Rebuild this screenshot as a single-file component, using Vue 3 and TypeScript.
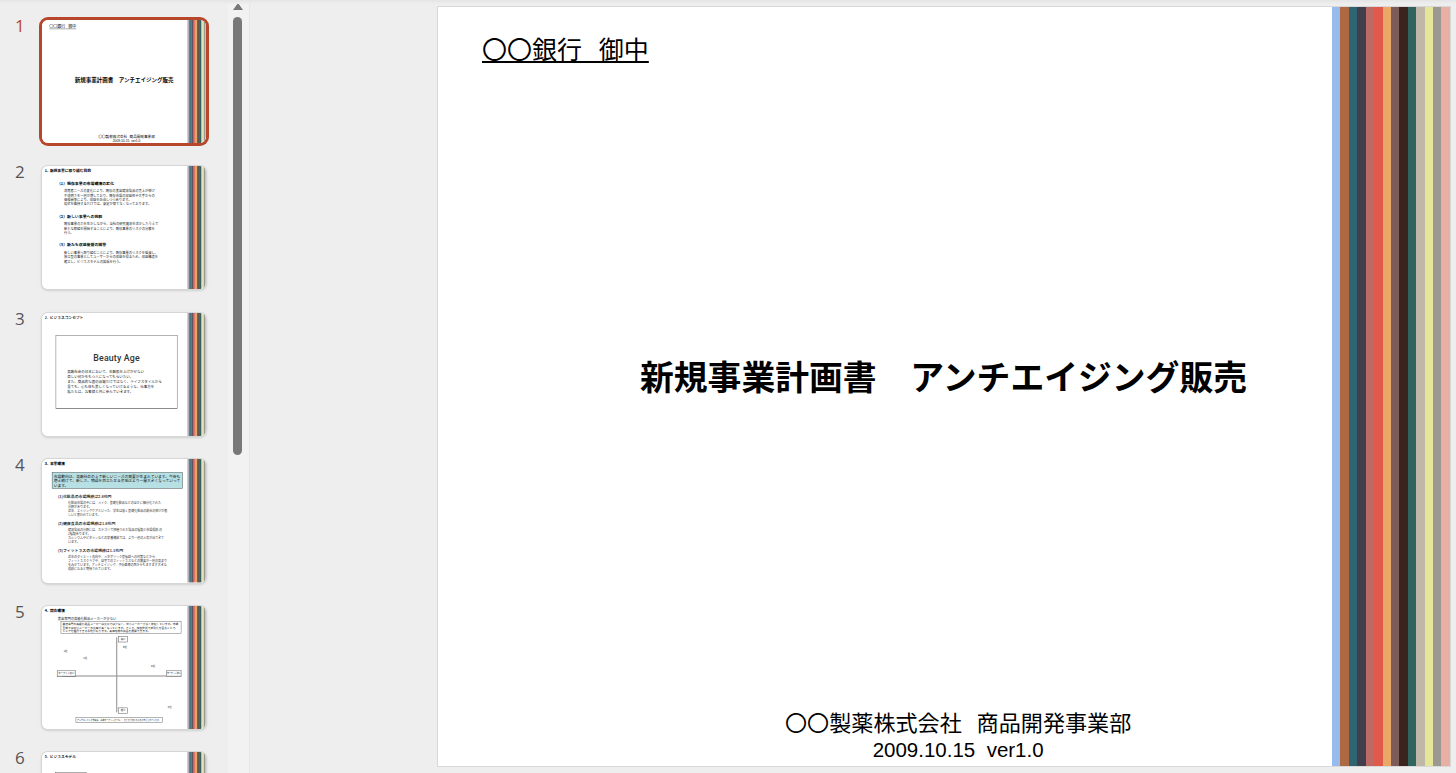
<script setup lang="ts">
const stripes: string[] = [
  '#98bbee', '#ad6a42', '#2f6472', '#413f4c', '#bd6a66', '#df5a4a', '#e9a868',
  '#7d5b58', '#3a251e', '#31645f', '#bfb8a8', '#e6e69a', '#9a9890', '#e8b0a4'
]
const numbers: number[] = [1, 2, 3, 4, 5, 6]
const conceptText =
  '高齢社会の日本において、年齢肌を上げがせない\n楽しい何かをもつ人になってもらいたい。\nまた、商品的な面の品質だけではなく、ライフスタイルから\n見ても、心も体も美しくなっていけるような、仕事方を\n私たちは、お客様と共に歩んでいきます。'
const plans = [
  {
    head: '（1）既存事業の市場環境の変化',
    body: '消費者ニーズの変化により、既存の美容健康食品の売上が伸び\n不透明さを一層が増しており、既存市場の収益性や大手からの\n価格競争により、収益を圧迫しつつあります。\n現状を維持するだけでは、安定が保てなくなっております。'
  },
  {
    head: '（2）新しい事業への挑戦',
    body: '既存事業の力を生かしながら、当社の研究資源を活かしたうえで\n新たな取組を開始することにより、既存事業のリスクの分散を\n行う。'
  },
  {
    head: '（3）新たな収益基盤の構築',
    body: '新しい事業へ取り組むことにより、既存事業のリスクを低減し、\n独立型の事業としてユーザーからの収益を得るため、収益構造を\n確立し、ビジネスモデルの拡張を行う。'
  }
]
const markets = [
  {
    head: '(1)化粧品の市場規模は2.8兆円',
    body: '化粧品市場の中には、メイク、基礎化粧品などのほかに細分化された\n分野があります。\n近年、エイジングケアといった、学生は低く基礎化粧品の割合の伸びが著\nしいと思われています。'
  },
  {
    head: '(2)健康食品の市場規模は1.8兆円',
    body: '健康食品の分野には、カテゴリで把握された食品の種類と市場規模 の\n2種類あります。\nカルシウムやビタミンなどの栄養補給では、より一層の人気が出てきて\nいます。'
  },
  {
    head: '(3)フィットネスの市場規模は1.1兆円',
    body: '近年のダイエット志向や、メタボリック症候群への対策などから、\nフィットネスクラブや、自宅でのフィットネスなどの需要が一層の高まり\nをみせています。アンチエイジング、予防医療の面からもますます大きな\n規模になると期待されています。'
  }
]
</script>

<template>
  <div class="app">
    <aside class="rail">
      <div class="thumbs">
        <div v-for="n in numbers" :key="n" class="row" :class="{ current: n === 1 }">
          <span class="num">{{ n }}</span>
          <div class="thumb">
            <div class="scaled">
              <div class="page">
                <div class="body">
                  <template v-if="n === 1">
                    <div class="cover">
                      <div class="to"><u>〇〇銀行&nbsp;&nbsp;&nbsp;御中</u></div>
                      <div class="name">新規事業計画書　アンチエイジング販売</div>
                      <div class="from">
                        <div class="company">〇〇製薬株式会社&nbsp;&nbsp;&nbsp;商品開発事業部</div>
                        <div class="date">2009.10.15&nbsp;&nbsp;ver1.0</div>
                      </div>
                    </div>
                  </template>

                  <template v-else-if="n === 2">
                    <h3 class="sec">1.&nbsp;&nbsp;新規事業に取り組む目的</h3>
                    <div class="plans">
                      <div v-for="p in plans" :key="p.head" class="plan">
                        <h4>{{ p.head }}</h4>
                        <p>{{ p.body }}</p>
                      </div>
                    </div>
                  </template>

                  <template v-else-if="n === 3">
                    <h3 class="sec light">2.&nbsp;&nbsp;ビジネスコンセプト</h3>
                    <div class="concept">
                      <div class="brand">Beauty Age</div>
                      <p>{{ conceptText }}</p>
                    </div>
                  </template>

                  <template v-else-if="n === 4">
                    <h3 class="sec">3.&nbsp;&nbsp;事業環境</h3>
                    <div class="callout">市場動向は、高齢社会の上で新しいニーズの需要が生まれています。今後も増え続けて、新しさ、物語を目立たせる余地はより一層大きくなっていっています。</div>
                    <div class="markets">
                      <div v-for="m in markets" :key="m.head" class="market">
                        <h4>{{ m.head }}</h4>
                        <p>{{ m.body }}</p>
                      </div>
                    </div>
                  </template>

                  <template v-else-if="n === 5">
                    <h3 class="sec">4.&nbsp;&nbsp;競合環境</h3>
                    <div class="sub">美容専門の高級化粧品メーカーが少ない</div>
                    <div class="note">美容専門の高級化粧品メーカーは大手では少なく、中小メーカーが多く存在しています。市場全体では中小メーカーの比率が高くなっています。そこで、独自技術で差別化を図ることで、シェアを獲得できる余地があります。高価格帯の商品を展開できます。</div>
                    <div class="map">
                      <i class="axis-h"></i>
                      <i class="axis-v"></i>
                      <span class="lab top">高い</span>
                      <span class="lab bottom">低い</span>
                      <span class="lab left">ターゲット広い</span>
                      <span class="lab right">ターゲット狭い</span>
                      <span class="co c1">A社</span>
                      <span class="co c2">B社</span>
                      <span class="co c3">C社</span>
                      <span class="co c4">D社</span>
                      <span class="co c5">E社</span>
                    </div>
                    <div class="foot">アンチエイジング市場は、基本ターゲットが少なく、まだまだ伸びるものと考えられています。</div>
                  </template>

                  <template v-else>
                    <h3 class="sec light">5.&nbsp;&nbsp;ビジネスモデル</h3>
                    <div class="model"></div>
                  </template>
                </div>
                <div class="bands">
                  <i v-for="c in stripes" :key="c" :style="{ background: c }"></i>
                </div>
              </div>
            </div>
          </div>
        </div>
      </div>
      <div class="scroll">
        <i class="up"></i>
        <i class="bar"></i>
      </div>
    </aside>

    <main class="stage">
      <section class="slide">
        <div class="cover">
          <div class="to"><u>〇〇銀行&nbsp;&nbsp;&nbsp;御中</u></div>
          <h1 class="name">新規事業計画書　アンチエイジング販売</h1>
          <div class="from">
            <div class="company">〇〇製薬株式会社&nbsp;&nbsp;&nbsp;商品開発事業部</div>
            <div class="date">2009.10.15&nbsp;&nbsp;ver1.0</div>
          </div>
        </div>
        <div class="bands">
          <i v-for="c in stripes" :key="c" :style="{ background: c }"></i>
        </div>
      </section>
    </main>
  </div>
</template>

<style>
html, body { margin: 0; height: 100%; overflow: hidden; background: #eeeeee; }
</style>

<style scoped>
.app {
  width: 1456px;
  height: 773px;
  display: flex;
  overflow: hidden;
  background: #eeeeee;
  font-family: "Noto Sans CJK JP", "Noto Sans", sans-serif;
  color: #000;
  position: relative;
}
.app::before {
  content: "";
  position: absolute;
  inset: 0 0 auto 0;
  height: 4px;
  background: linear-gradient(#e4e4e4, #eeeeee);
  z-index: 2;
}
.rail { width: 250px; flex: none; display: flex; border-right: 1px solid #e6e6e6; box-sizing: border-box; height: 773px; overflow: hidden; }
.thumbs { width: 228px; flex: none; padding-top: 19.5px; box-sizing: border-box; display: flex; flex-direction: column; gap: 23.2px; }
.row { display: flex; height: 123.4px; flex: none; }
.num { width: 42.3px; flex: none; box-sizing: border-box; padding-left: 15px; font: 17px/11px "Open Sans", "Liberation Sans", sans-serif; color: #555; }
.current .num { color: #b7472a; }
.thumb {
  width: 164px;
  height: 123.4px;
  flex: none;
  border-radius: 6px;
  overflow: hidden;
  background: #fff;
  box-shadow: 0 0 0 1px #d6d6d6, 0 1px 3px rgba(0, 0, 0, .25);
  position: relative;
}
.current .thumb { box-shadow: 0 0 0 3px #b7472a; }
.scaled { width: 1012px; height: 759px; transform: scale(0.1626); transform-origin: 0 0; }
.page { width: 1012px; height: 759px; display: flex; background: #fff; }
.body { flex: 1; min-width: 0; overflow: hidden; }
.bands { width: 118px; flex: none; display: flex; height: 100%; }
.bands i { flex: 1; display: block; }

.cover { flex: 1; min-width: 0; height: 759px; display: flex; flex-direction: column; align-items: flex-start; }
.to { margin: 22px 0 0 44px; font-size: 25px; line-height: 38px; white-space: nowrap; }
.name { margin: 286px 0 0 202px; font-size: 33.8px; line-height: 46px; font-weight: 700; white-space: nowrap; }
.from { margin: auto 0 0 347px; text-align: center; }
.company { font-size: 22.1px; line-height: 32px; white-space: nowrap; }
.date { font-size: 20.5px; line-height: 26px; font-family: "Liberation Sans", sans-serif; padding-bottom: 3px; }

.sec { margin: 0; padding: 10px 0 0 17px; font-size: 23px; line-height: 30px; font-weight: 700; white-space: nowrap; }
.sec.light { font-weight: 500; }
p { margin: 0; white-space: pre-line; }
h4 { margin: 0; }

.plans { padding: 49px 0 0 92px; display: flex; flex-direction: column; gap: 45px; }
.plan h4 { font-size: 24px; line-height: 30px; font-weight: 700; }
.plan p { margin: 20px 0 0 43px; font-size: 20px; line-height: 27px; color: #222; }

.concept { margin: 95px 0 0 84px; width: 749px; height: 454px; box-sizing: border-box; border: 3px solid #666; border-bottom-width: 5px; padding-top: 106px; text-align: center; }
.brand { font-size: 54px; line-height: 70px; font-weight: 500; font-family: Roboto, sans-serif; letter-spacing: 1px; color: #333; }
.concept p { text-align: left; padding: 33px 0 0 69px; font-size: 21.5px; line-height: 30px; color: #222; }

.callout { margin: 42px 0 0 61px; width: 804px; height: 100px; box-sizing: border-box; background: #b7e0e4; border: 3px solid #555; padding: 5px 8px; font-size: 23px; line-height: 29px; color: #111; }
.markets { padding: 33px 0 0 98px; display: flex; flex-direction: column; gap: 24px; }
.market h4 { font-size: 24px; line-height: 30px; font-weight: 500; }
.market p { margin: 13px 0 0 62px; font-size: 18.5px; line-height: 24.6px; color: #333; }

.sub { margin: 24px 0 0 97px; font-size: 20px; line-height: 30px; color: #222; white-space: nowrap; }
.note { margin: 1px 0 0 115px; width: 742px; height: 74px; box-sizing: border-box; border: 3px solid #666; padding: 2px 8px; font-size: 17px; line-height: 22px; color: #222; overflow: hidden; }
.map { position: relative; margin: 18px 0 0 92px; width: 765px; height: 474px; }
.axis-h { position: absolute; left: 33px; top: 240px; width: 639px; height: 7px; background: #999; }
.axis-v { position: absolute; left: 364px; top: 6px; width: 7px; height: 461px; background: #999; }
.lab { position: absolute; box-sizing: border-box; border: 3px solid #555; background: #fff; font-size: 14px; line-height: 28px; height: 36px; text-align: center; white-space: nowrap; }
.top { left: 378px; top: 0; width: 57px; }
.bottom { left: 378px; top: 438px; width: 57px; }
.left { left: 0; top: 210px; width: 115px; border-bottom-color: #000; }
.right { left: 672px; top: 210px; width: 93px; font-size: 12px; border-bottom-color: #000; }
.co { position: absolute; font-size: 15px; line-height: 20px; color: #333; }
.c1 { left: 41px; top: 77px; }
.c2 { left: 406px; top: 58px; }
.c3 { left: 161px; top: 122px; }
.c4 { left: 579px; top: 173px; }
.c5 { left: 682px; top: 425px; }
.foot { margin: 22px 0 0 207px; width: 537px; height: 36px; box-sizing: border-box; border: 3px solid #666; padding: 0 6px; font-size: 12px; line-height: 30px; color: #222; white-space: nowrap; overflow: hidden; }
.model { margin: 83px 0 0 83px; width: 190px; height: 120px; box-sizing: border-box; border: 3px solid #555; }

.scroll { width: 21px; flex: none; background: #f2f2f2; position: relative; }
.up {
  position: absolute; left: 5px; top: 3px; width: 0; height: 0;
  border-left: 5px solid transparent; border-right: 5px solid transparent; border-bottom: 7px solid #777;
}
.bar { position: absolute; left: 5px; top: 17px; width: 9px; height: 438px; border-radius: 5px; background: #787878; }

.stage { flex: 1; min-width: 0; box-sizing: border-box; padding: 7px 6px 0 188px; }
.slide { width: 1012px; height: 759px; display: flex; background: #fff; box-shadow: 0 0 0 1px #d8d8d8; position: relative; z-index: 3; }
</style>
